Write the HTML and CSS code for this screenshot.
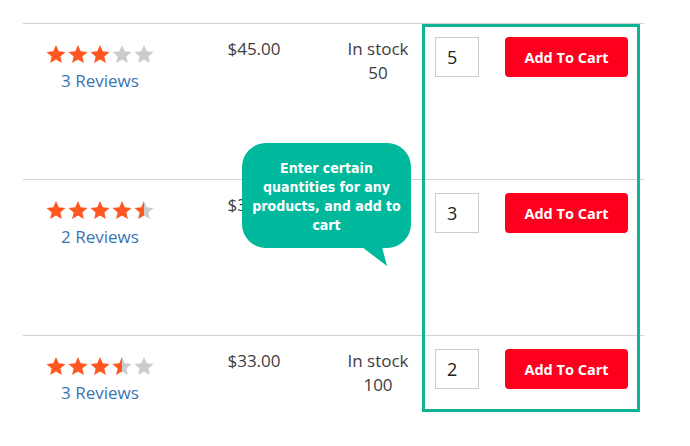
FILE: index.html
```html
<!DOCTYPE html>
<html lang="en">
<head>
<meta charset="utf-8">
<title>Cart</title>
<link rel="stylesheet" href="styles.css">
</head>
<body>
<svg class="defs" width="0" height="0" aria-hidden="true">
  <defs>
    <linearGradient id="half" x1="0" x2="1" y1="0" y2="0">
      <stop offset="50%" stop-color="#fe5722"/>
      <stop offset="50%" stop-color="#cccccc"/>
    </linearGradient>
    <polygon id="star" points="10,0 12.7,6.28 19.51,6.91 14.37,11.42 15.88,18.09 10,14.6 4.12,18.09 5.63,11.42 0.49,6.91 7.3,6.28"/>
  </defs>
</svg>
<div class="page">
  <div class="cart-table">
    <div class="row">
      <div class="cell rating">
        <div class="stars">
          <svg viewBox="0 0 20 18.5" class="star on"><use href="#star"/></svg>
          <svg viewBox="0 0 20 18.5" class="star on"><use href="#star"/></svg>
          <svg viewBox="0 0 20 18.5" class="star on"><use href="#star"/></svg>
          <svg viewBox="0 0 20 18.5" class="star off"><use href="#star"/></svg>
          <svg viewBox="0 0 20 18.5" class="star off"><use href="#star"/></svg>
        </div>
        <a class="reviews" href="#">3 Reviews</a>
      </div>
      <div class="cell price">$45.00</div>
      <div class="cell stock">In stock<br>50</div>
      <div class="cell actions">
        <input class="qty" type="text" value="5">
        <button class="add">Add To Cart</button>
      </div>
    </div>
    <div class="row">
      <div class="cell rating">
        <div class="stars">
          <svg viewBox="0 0 20 18.5" class="star on"><use href="#star"/></svg>
          <svg viewBox="0 0 20 18.5" class="star on"><use href="#star"/></svg>
          <svg viewBox="0 0 20 18.5" class="star on"><use href="#star"/></svg>
          <svg viewBox="0 0 20 18.5" class="star on"><use href="#star"/></svg>
          <svg viewBox="0 0 20 18.5" class="star half"><use href="#star"/></svg>
        </div>
        <a class="reviews" href="#">2 Reviews</a>
      </div>
      <div class="cell price">$39.00</div>
      <div class="cell stock">In stock<br>80</div>
      <div class="cell actions">
        <input class="qty" type="text" value="3">
        <button class="add">Add To Cart</button>
      </div>
    </div>
    <div class="row">
      <div class="cell rating">
        <div class="stars">
          <svg viewBox="0 0 20 18.5" class="star on"><use href="#star"/></svg>
          <svg viewBox="0 0 20 18.5" class="star on"><use href="#star"/></svg>
          <svg viewBox="0 0 20 18.5" class="star on"><use href="#star"/></svg>
          <svg viewBox="0 0 20 18.5" class="star half"><use href="#star"/></svg>
          <svg viewBox="0 0 20 18.5" class="star off"><use href="#star"/></svg>
        </div>
        <a class="reviews" href="#">3 Reviews</a>
      </div>
      <div class="cell price">$33.00</div>
      <div class="cell stock">In stock<br>100</div>
      <div class="cell actions">
        <input class="qty" type="text" value="2">
        <button class="add">Add To Cart</button>
      </div>
    </div>
  </div>
  <div class="highlight"></div>
  <div class="tooltip">Enter certain quantities for any products, and add to cart</div>
</div>
</body>
</html>
```
FILE: styles.css
```css
html, body {
  margin: 0;
  padding: 0;
  background: #ffffff;
}
body {
  font-family: "Open Sans", "Liberation Sans", sans-serif;
  color: #333333;
  overflow: hidden;
}
.defs {
  position: absolute;
}
.page {
  position: relative;
  padding: 23px 0 0 23px;
  width: 621px;
}
.row {
  display: grid;
  grid-template-columns: 154px 154px 94px 219px;
  height: 156px;
  box-sizing: border-box;
  border-top: 1px solid #d2d2d2;
}
.cell {
  font-size: 17px;
  line-height: 24px;
}
.rating {
  padding-top: 21px;
  display: flex;
  flex-direction: column;
  align-items: center;
}
.stars {
  display: flex;
  gap: 2px;
  height: 19px;
  margin-bottom: 5px;
}
.star {
  width: 20px;
  height: 18.5px;
  display: block;
}
.star.on { fill: #fe5722; }
.star.off { fill: #cccccc; }
.star.half { fill: url(#half); }
.reviews {
  color: #3a72b6;
  text-decoration: none;
}
.price {
  padding-top: 13px;
  text-align: center;
  color: #3d3d3d;
}
.stock {
  padding-top: 13px;
  text-align: center;
  color: #3d3d3d;
}
.actions {
  padding-top: 13px;
  display: flex;
  align-items: flex-start;
}
.qty {
  box-sizing: border-box;
  width: 44px;
  height: 40px;
  margin: 0 0 0 10px;
  padding: 0 0 0 11px;
  border: 1px solid #cccccc;
  font-family: "Open Sans", sans-serif;
  font-size: 18px;
  color: #222222;
  outline: none;
}
.add {
  box-sizing: border-box;
  width: 123px;
  height: 40px;
  margin-left: 26px;
  border: 0;
  border-radius: 4px;
  background: #fe001d;
  color: #ffffff;
  font-family: "Open Sans", sans-serif;
  font-weight: 700;
  font-size: 14.5px;
  padding: 0;
}
.highlight {
  position: absolute;
  left: 422px;
  top: 24px;
  width: 218px;
  height: 388px;
  box-sizing: border-box;
  border: 3px solid #12b393;
}
.tooltip {
  position: absolute;
  left: 242px;
  top: 143px;
  width: 169px;
  height: 105px;
  box-sizing: border-box;
  padding: 16px 6px 0;
  border-radius: 24px;
  background: #00b89c;
  color: #ffffff;
  font-family: "DejaVu Sans Condensed", "DejaVu Sans", sans-serif;
  font-weight: 700;
  font-size: 14px;
  line-height: 19px;
  text-align: center;
}
.tooltip::after {
  content: "";
  position: absolute;
  left: 120px;
  top: 104px;
  width: 26px;
  height: 19px;
  background: #00b89c;
  clip-path: polygon(0 0, 20px 0, 25px 19px);
}
```
